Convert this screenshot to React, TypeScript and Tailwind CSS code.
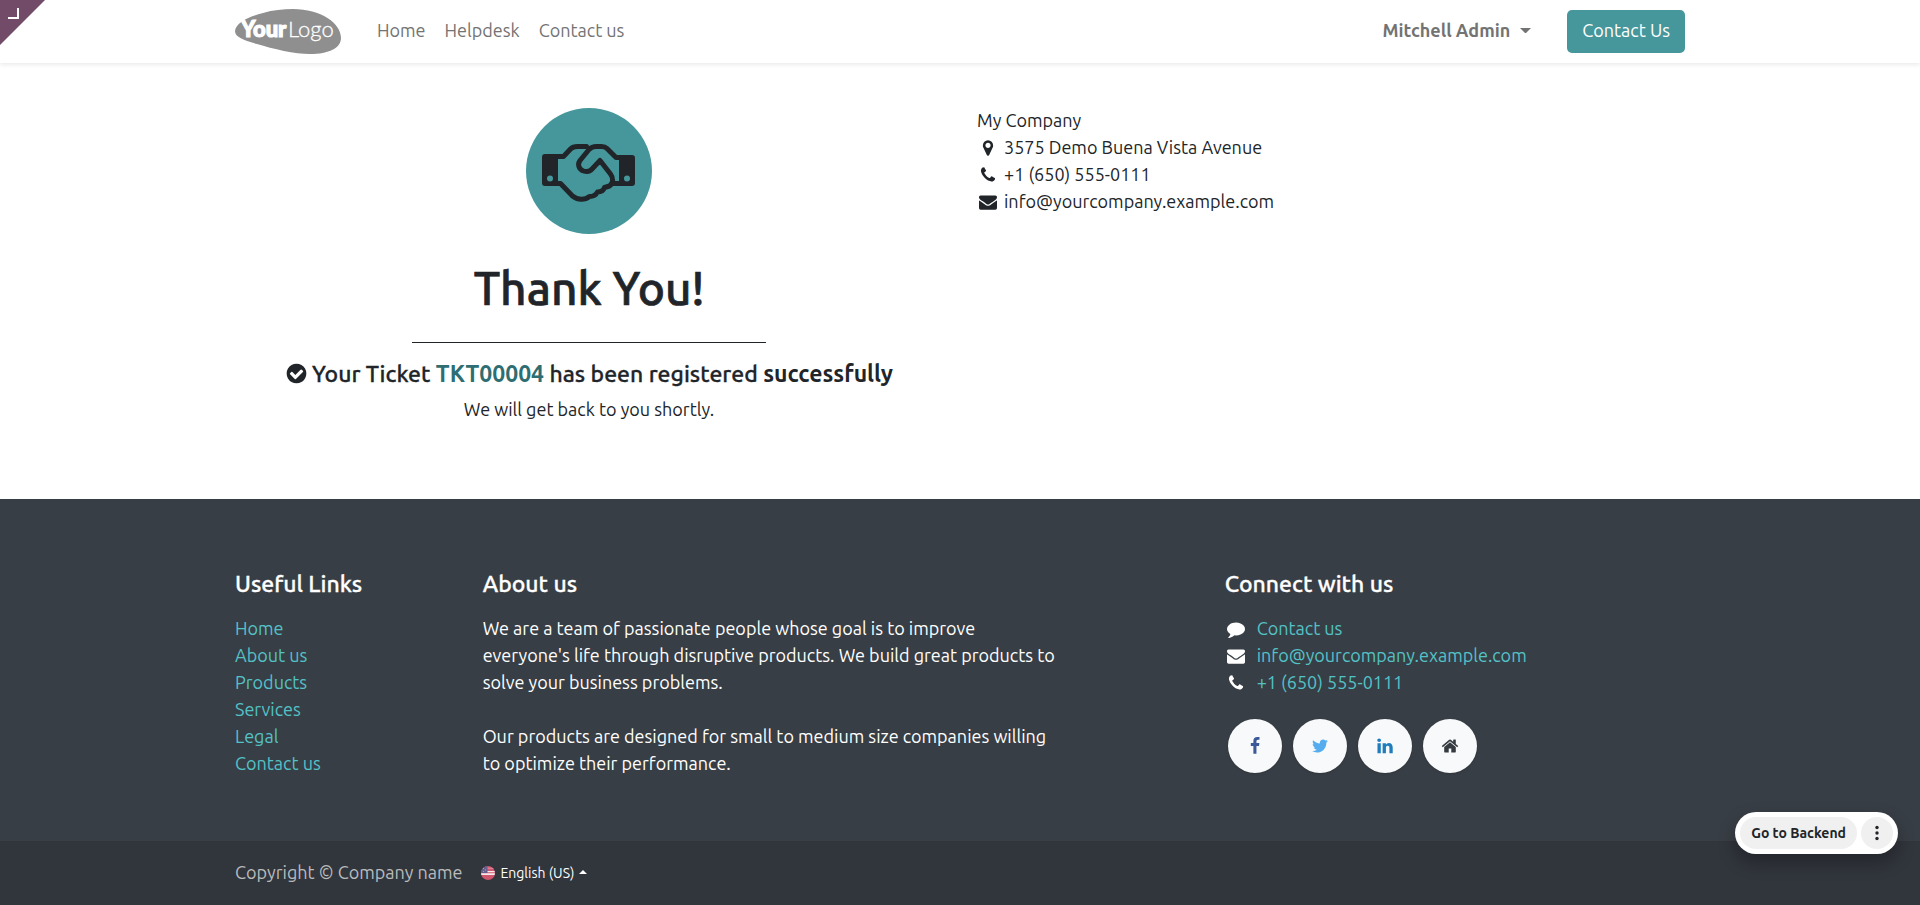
import React from "react";

const icons = {
  phone: "M1600 1240q0 27-10 70.5t-21 68.5q-21 50-122 106-94 51-186 51-27 0-53-3.5t-57-12.5-47-14.5-55.5-20.5-49-18q-98-35-175-83-127-79-264-216t-216-264q-48-77-83-175-3-9-18-49t-20.5-55.5-14.5-47-12.5-57-3.5-53q0-92 51-186 56-101 106-122 25-11 68.5-21t70.5-10q14 0 21 3 18 6 53 76 11 19 30 54t35 63.5 31 53.5q3 4 17.5 25t21.5 35.5 7 28.5q0 20-28.5 50t-62 55-62 53-28.5 46q0 9 5 22.5t8.5 20.5 14 24 11.5 19q76 137 174 235t235 174q2 1 19 11.5t24 14 20.5 8.5 22.5 5q18 0 46-28.5t53-62 55-62 50-28.5q14 0 28.5 7t35.5 21.5 25 17.5q25 15 53.5 31t63.5 35 54 30q70 35 76 53 3 7 3 21z",
  envelope: "M1792 710v794q0 66-47 113t-113 47h-1472q-66 0-113-47t-47-113v-794q44 49 101 87 362 246 497 345 57 42 92.5 65.5t94.5 48 110 24.5h2q51 0 110-24.5t94.5-48 92.5-65.5q170-123 498-345 57-39 100-87zm0-294q0 79-49 151t-122 123q-376 261-468 325-10 7-42.5 31t-54 38.5-52 32.5-57.5 27-50 9h-2q-23 0-50-9t-57.5-27-52-32.5-54-38.5-42.5-31q-91-64-262-182.5t-205-142.5q-62-42-117-115.5t-55-136.5q0-78 41.5-130t118.5-52h1472q65 0 112.5 47t47.5 113z",
  marker: "M1152 640q0-106-75-181t-181-75-181 75-75 181 75 181 181 75 181-75 75-181zm256 0q0 109-33 179l-364 774q-16 33-47.5 52t-67.5 19-67.5-19-46.5-52l-365-774q-33-70-33-179 0-212 150-362t362-150 362 150 150 362z",
  check: "M1412 734q0-28-18-46l-91-90q-19-19-45-19t-45 19l-408 407-226-226q-19-19-45-19t-45 19l-91 90q-18 18-18 46 0 27 18 45l362 362q19 19 45 19 27 0 46-19l543-543q18-18 18-45zm252 162q0 209-103 385.5t-279.5 279.5-385.5 103-385.5-103-279.5-279.5-103-385.5 103-385.5 279.5-279.5 385.5-103 385.5 103 279.5 279.5 103 385.5z",
  comment: "M1792 896q0 174-120 321.5t-326 233-450 85.5q-70 0-145-8-198 175-460 242-49 14-114 22-17 2-30.5-9t-17.5-29v-1q-3-4-.5-12t2-10 4.5-9.5l6-9 7-8.5 8-9q7-8 31-34.5t34.5-38 31-39.5 32.5-51 27-59 26-76q-157-89-247.5-220t-90.5-281q0-130 71-248.5t191-204.5 286-136.5 348-50.5q244 0 450 85.5t326 233 120 321.5z",
  home: "M1472 992v480q0 26-19 45t-45 19h-384v-384h-256v384h-384q-26 0-45-19t-19-45v-480q0-1 .5-3t.5-3l575-474 575 474q1 2 1 6zm223-69l-62 74q-8 9-21 11h-3q-13 0-21-7l-692-577-692 577q-12 8-24 7-13-2-21-11l-62-74q-8-10-7-23.5t11-21.5l719-599q32-26 76-26t76 26l244 204v-195q0-14 9-23t23-9h192q14 0 23 9t9 23v408l219 182q10 8 11 21.5t-7 23.5z",
  facebook: "M1343 12v264h-157q-86 0-116 36t-30 108v189h293l-39 296h-254v759h-306v-759h-255v-296h255v-218q0-186 104-288.5t277-102.5q147 0 228 12z",
  twitter: "M1684 408q-67 98-162 167 1 14 1 42 0 130-38 259.5t-115.5 248.5-184.5 210.5-258 146-323 54.5q-271 0-496-145 35 4 78 4 225 0 401-138-105-2-188-64.5t-114-159.5q33 5 61 5 43 0 85-11-112-23-185.5-111.5t-73.5-205.5v-4q68 38 146 41-66-44-105-115t-39-154q0-88 44-163 121 149 294.5 238.5t371.5 99.5q-8-38-8-74 0-134 94.5-228.5t228.5-94.5q140 0 236 102 109-21 205-78-37 115-142 178 93-10 186-50z",
  linkedin: "M477 625v991h-330v-991h330zm21-306q1 73-50.5 122t-135.5 49h-2q-82 0-132-49t-50-122q0-74 51.5-122.5t134.5-48.5 133 48.5 51 122.5zm1166 729v568h-329v-530q0-105-40.5-164.5t-126.5-59.5q-63 0-105.5 34.5t-63.5 85.5q-11 30-11 81v553h-329q2-399 2-647t-1-296l-1-48h329v144h-2q20-32 41-56t56.5-52 87-43.5 114.5-15.5q171 0 275 113.5t104 332.5z",
};

type IconName = keyof typeof icons;

function Icon({ name, className }: { name: IconName; className: string }) {
  return (
    <svg viewBox="0 0 1792 1792" fill="currentColor" aria-hidden="true" className={className}>
      <path d={icons[name]} />
    </svg>
  );
}

function Caret({ up = false, className }: { up?: boolean; className: string }) {
  return (
    <svg viewBox="0 0 12 6" fill="currentColor" aria-hidden="true" className={className}>
      <path d={up ? "M0 6 6 0l6 6z" : "M0 0h12L6 6z"} />
    </svg>
  );
}

function Logo() {
  return (
    <svg viewBox="0 0 106 45" className="h-[45px] w-[106px]" aria-label="YourLogo">
      <path
        d="M0 22C1 14 12 8 28 4C38 1 48 0 58 0C86 0 106 14 106 29C106 39 94 45 75 45C60 45 38 40 22 35C8 31 0 28 0 22Z"
        fill="#8f8f8f"
      />
      <g fill="#ffffff" fontFamily="Lato, sans-serif" fontSize="22">
        <text x="6" y="28" fontWeight="900" stroke="#ffffff" strokeWidth="1.1">Your</text>
        <text x="53" y="28" fontWeight="300" stroke="#ffffff" strokeWidth="0.3">Logo</text>
      </g>
    </svg>
  );
}

function Handshake() {
  return (
    <svg viewBox="0 0 94 60" aria-hidden="true" className="w-[94px]">
      <g fill="none" stroke="#212529" strokeWidth="5" strokeLinejoin="round" strokeLinecap="round">
        <path d="M16 12.500h5.500l7-7.500c2-2 4-2.500 7-2.500h9" />
        <path d="M78 13.500h-4l-9-9c-1.500-1.500-3-2-5.500-2H54c-2.500 0-5 1-7 3L38 16.500c-3 4-1 9 3.500 10.500c4 1.300 7 .2 9-2.500L58 16.500L68.500 30c3 4 3 9-1 12l-5 1.500c-1 3-3.500 4.500-7 4.500c-1.500 3-4.500 4.500-8 4.500c-5 4-12 3.500-17-.5L18.500 39.500H15" />
        <path d="M71 39.500h8" />
      </g>
      <path
        fill="#212529"
        fillRule="evenodd"
        d="M3 10h13v32H3q-3 0-3-3V13q0-3 3-3zm5 21.500a3 3 0 1 0 0 6 3 3 0 0 0 0-6zM77 11h13q3 0 3 3v25q0 3-3 3H77zm8 20.500a3 3 0 1 0 0 6 3 3 0 0 0 0-6z"
      />
    </svg>
  );
}

function Flag() {
  return (
    <svg viewBox="0 0 14 14" aria-hidden="true" className="size-[14px]">
      <clipPath id="flag-circle"><circle cx="7" cy="7" r="7" /></clipPath>
      <g clipPath="url(#flag-circle)">
        <path fill="#d0576e" d="M0 0h14v14H0z" />
        <path fill="#e08fa0" d="M6 1.800h8v1H6z" />
        <path fill="#f3e9ec" d="M6 5h8v1.200H6zM0 7.200h14v1.800H0z" />
        <path fill="#66608f" d="M0 0h6.500v7H0z" />
        <path fill="#a3a3c4" d="M2 2h1v1H2zM4 3.500h1v1H4zM2 5h1v1H2z" />
      </g>
    </svg>
  );
}

const container = "mx-auto w-full max-w-[1486px] px-[18px]";
const heading = "mb-[18px] text-[23px] leading-[27px] font-medium [-webkit-text-stroke:0.3px]";
const usefulLinks = ["Home", "About us", "Products", "Services", "Legal", "Contact us"];
const contacts: { icon: IconName; label: string; href: string }[] = [
  { icon: "comment", label: "Contact us", href: "#contact" },
  { icon: "envelope", label: "info@yourcompany.example.com", href: "mailto:info@yourcompany.example.com" },
  { icon: "phone", label: "+1 (650) 555-0111", href: "tel:+16505550111" },
];
const socials: { icon: IconName; label: string; color: string }[] = [
  { icon: "facebook", label: "Facebook", color: "text-[#3b5998]" },
  { icon: "twitter", label: "Twitter", color: "text-[#55acee]" },
  { icon: "linkedin", label: "LinkedIn", color: "text-[#1f7dbd]" },
  { icon: "home", label: "Homepage", color: "text-[#343a40]" },
];
const company: { icon: IconName; label: string }[] = [
  { icon: "marker", label: "3575 Demo Buena Vista Avenue" },
  { icon: "phone", label: "+1 (650) 555-0111" },
  { icon: "envelope", label: "info@yourcompany.example.com" },
];

export default function App() {
  return (
    <div className="flex min-h-screen flex-col bg-white font-['Ubuntu','Noto_Sans',sans-serif] text-[18px] leading-[27px] text-[#212529]">
      <header className="relative z-10 bg-white shadow-[0_2px_4px_rgba(0,0,0,0.08)]">
        <a href="#backend" aria-label="Apps" className="absolute top-0 left-0">
          <svg viewBox="0 0 45 45" className="size-[45px]">
            <path d="M0 0h45L0 45z" fill="#714b67" />
            <path d="M8 18h10V8" fill="none" stroke="#fff" strokeWidth="2" />
          </svg>
        </a>
        <div className={`${container} flex h-[63px] items-center`}>
          <a href="#home" className="mr-9"><Logo /></a>
          <nav className="flex grow gap-[19px] pb-0.5 text-[#737373]">
            <a href="#home">Home</a>
            <a href="#helpdesk">Helpdesk</a>
            <a href="#contact">Contact us</a>
          </nav>
          <button type="button" className="mr-9 flex items-center gap-[10px] pb-0.5 font-bold text-[#737373]">
            Mitchell Admin
            <Caret className="w-[11px]" />
          </button>
          <a href="#contact" className="rounded-[5px] bg-[#45979c] px-[15px] pt-[7px] pb-[9px] text-white">
            Contact Us
          </a>
        </div>
      </header>

      <main className={`${container} grid grow grid-cols-2 gap-[34px] pt-[45px] pb-[75px]`}>
        <section className="flex flex-col items-center text-center">
          <div className="flex size-[126px] items-center justify-center rounded-full bg-[#45979c] pt-[6px]">
            <Handshake />
          </div>
          <h1 className="mt-[27px] text-[46px] leading-[54px] font-medium [-webkit-text-stroke:0.7px]">Thank You!</h1>
          <hr className="mt-[27px] w-1/2 border-[#212529]" />
          <h5 className="mt-[17px] flex items-center gap-1 text-[23px] leading-[27px] font-medium">
            <Icon name="check" className="size-[23px]" />
            <span className="[-webkit-text-stroke:0.3px]">
              Your Ticket{" "}
              <strong className="text-[#2e6e72] [-webkit-text-stroke:0px]">TKT00004</strong> has been
              registered <strong className="[-webkit-text-stroke:0px]">successfully</strong>
            </span>
          </h5>
          <p className="mt-[9px]">We will get back to you shortly.</p>
        </section>
        <address className="-mt-px not-italic">
          <div>My Company</div>
          {company.map((item) => (
            <div key={item.label} className="flex items-center gap-[5px]">
              <span className="flex w-[22px] justify-center">
                <Icon name={item.icon} className="size-[18px]" />
              </span>
              {item.label}
            </div>
          ))}
        </address>
      </main>

      <footer className="bg-[#383e45] text-white">
        <div className={`${container} grid grid-cols-12 pt-[71px] pb-16`}>
          <section className="col-span-2">
            <h5 className={heading}>Useful Links</h5>
            <ul>
              {usefulLinks.map((label) => (
                <li key={label}>
                  <a href="#page" className="text-[#53c2c7]">{label}</a>
                </li>
              ))}
            </ul>
          </section>
          <section className="col-span-5 pr-4 pl-[6px]">
            <h5 className={heading}>About us</h5>
            <p className="mb-[27px]">
              We are a team of passionate people whose goal is to improve everyone's life through disruptive
              products. We build great products to solve your business problems.
            </p>
            <p>
              Our products are designed for small to medium size companies willing to optimize their performance.
            </p>
          </section>
          <section className="col-span-4 col-start-9 pl-[23px]">
            <h5 className={heading}>Connect with us</h5>
            <ul>
              {contacts.map((item) => (
                <li key={item.label} className="flex items-center gap-[9px]">
                  <span className="flex w-[23px] justify-center">
                    <Icon name={item.icon} className="size-[18px]" />
                  </span>
                  <a href={item.href} className="text-[#53c2c7]">{item.label}</a>
                </li>
              ))}
            </ul>
            <div className="mt-[23px] flex gap-[11px] pl-[3px]">
              {socials.map((item) => (
                <a
                  key={item.label}
                  href="#social"
                  aria-label={item.label}
                  className={`flex size-[54px] items-center justify-center rounded-full bg-[#f8f9fa] shadow-sm ${item.color}`}
                >
                  <Icon name={item.icon} className="size-[18px]" />
                </a>
              ))}
            </div>
          </section>
        </div>
        <div className="bg-[#31353c]">
          <div className={`${container} flex h-16 items-center gap-[19px]`}>
            <span className="pb-0.5 text-[#b9bbbd]">Copyright © Company name</span>
            <button type="button" className="flex items-center gap-[5px] text-[14px]">
              <Flag />
              English (US)
              <Caret up className="mb-0.5 w-2" />
            </button>
          </div>
        </div>
      </footer>

      <div className="fixed right-[22px] bottom-[51px] z-20 flex gap-1 rounded-full bg-white p-[5px] text-[#212529] shadow-[0_8px_18px_rgba(0,0,0,0.3)]">
        <a href="#backend" className="flex h-8 items-center rounded-full bg-[#f0f0f0] px-[11px] text-[14px] font-bold">
          Go to Backend
        </a>
        <button type="button" aria-label="More" className="flex size-8 items-center justify-center rounded-full bg-[#f0f0f0]">
          <svg viewBox="0 0 4 16" fill="currentColor" className="h-4">
            <circle cx="2" cy="2.500" r="1.700" />
            <circle cx="2" cy="8" r="1.700" />
            <circle cx="2" cy="13.500" r="1.700" />
          </svg>
        </button>
      </div>
    </div>
  );
}
